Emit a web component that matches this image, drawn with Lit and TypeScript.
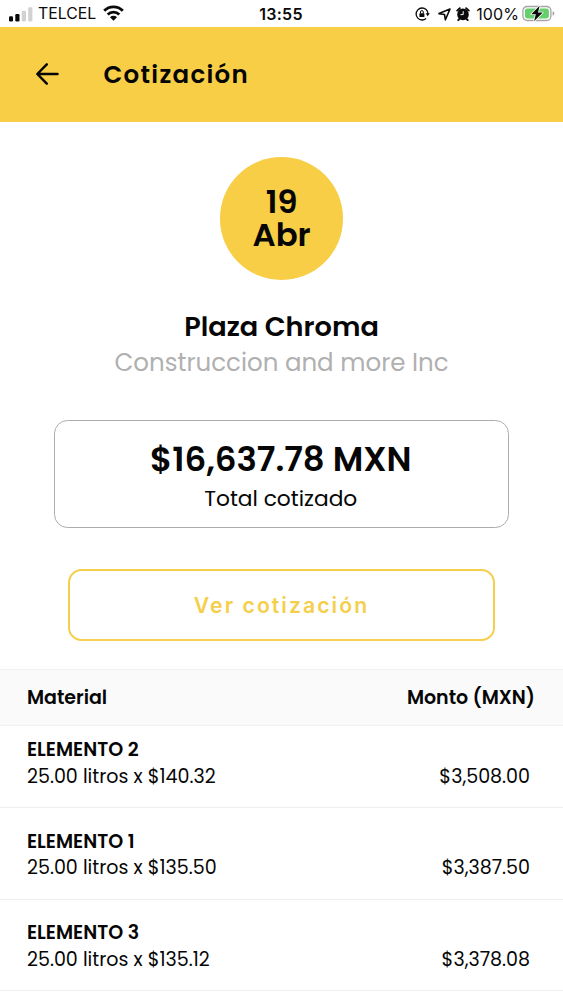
import { LitElement, html, css } from "lit";
import { customElement } from "lit/decorators.js";

interface Item {
  name: string;
  detail: string;
  amount: string;
}

const ITEMS: Item[] = [
  { name: "ELEMENTO 2", detail: "25.00 litros x $140.32", amount: "$3,508.00" },
  { name: "ELEMENTO 1", detail: "25.00 litros x $135.50", amount: "$3,387.50" },
  { name: "ELEMENTO 3", detail: "25.00 litros x $135.12", amount: "$3,378.08" },
];

@customElement("status-bar")
export class StatusBar extends LitElement {
  static styles = css`
    :host {
      display: grid;
      grid-template-columns: 1fr auto 1fr;
      align-items: center;
      height: 27px;
      box-sizing: border-box;
      padding: 1px 8px 0 9px;
      font: 400 16px/26px Inter, "Liberation Sans", sans-serif;
      color: #0a0a0a;
    }
    svg { display: block; flex: none; }
    .side { display: flex; align-items: center; height: 26px; }
    .right { justify-content: flex-end; }
    .carrier { margin-left: 5px; font-size: 15.8px; }
    .wifi { margin-left: 7px; margin-top: -2px; }
    .time { margin-right: 2px; font-weight: 600; font-size: 16px; letter-spacing: 0.3px; }
    .nav { margin-left: 8px; }
    .alarm { margin-left: 5px; }
    .pct { margin-left: 6px; letter-spacing: 0.1px; }
    .battery { margin-left: 3px; margin-top: -2px; }
  `;

  render() {
    return html`
      <div class="side">
        <svg width="24" height="15" viewBox="0 0 24 15">
          <rect x="0" y="9.3" width="4" height="5.2" rx="1.2" fill="#0a0a0a" />
          <rect x="6.3" y="7" width="4.2" height="7.5" rx="1.2" fill="#0a0a0a" />
          <rect x="12.8" y="3.8" width="4.2" height="10.7" rx="1.2" fill="#d2d2d2" />
          <rect x="19.2" y="0.3" width="4.2" height="14.2" rx="1.2" fill="#d2d2d2" />
        </svg>
        <span class="carrier">TELCEL</span>
        <svg class="wifi" width="21" height="16" viewBox="0 0 21 16">
          <g fill="none" stroke="#0a0a0a" stroke-width="2.8">
            <path d="M1.2 5.7a13.2 13.2 0 0 1 18.6 0" />
            <path d="M4.7 9.5a8.2 8.2 0 0 1 11.6 0" />
          </g>
          <path d="M10.5 15.8 7 12.3a5 5 0 0 1 7 0z" fill="#0a0a0a" />
        </svg>
      </div>
      <span class="time">13:55</span>
      <div class="side right">
        <svg width="15" height="14" viewBox="0 0 15 14">
          <path d="M11.1 2.5A6 6 0 1 0 11.1 11.5M11.1 2.5A6 6 0 0 1 13 7" fill="none" stroke="#0a0a0a" stroke-width="1.3" />
          <path d="M10.6 6.3h4.2l-2.1 2.9z" fill="#0a0a0a" />
          <rect x="4.4" y="6.2" width="5" height="3.9" rx="0.6" fill="#0a0a0a" />
          <path d="M5.5 6.4V5a1.4 1.4 0 0 1 2.8 0v1.4" fill="none" stroke="#0a0a0a" stroke-width="1" />
        </svg>
        <svg class="nav" width="13" height="13" viewBox="0 0 13 13">
          <path d="M12 1 7.4 11.8 6.5 6.5 1 5.6z" fill="none" stroke="#0a0a0a" stroke-width="1.6" stroke-linejoin="round" />
        </svg>
        <svg class="alarm" width="14" height="14" viewBox="0 0 14 14">
          <circle cx="7" cy="7.4" r="5.8" fill="#0a0a0a" />
          <path d="M1.2 3.6 3.8 1.2M12.8 3.6 10.2 1.2M2.3 13.2l1.6-1.8M11.7 13.2l-1.6-1.8" stroke="#0a0a0a" stroke-width="1.9" stroke-linecap="round" />
          <path d="M7.2 4.2v3.4H4.4" fill="none" stroke="#fff" stroke-width="1" />
        </svg>
        <span class="pct">100%</span>
        <svg class="battery" width="33" height="17" viewBox="0 0 33 17">
          <rect x="0.9" y="1.5" width="28" height="14" rx="4.2" fill="none" stroke="#a5a5a5" stroke-width="1.3" />
          <rect x="2.9" y="3.5" width="24" height="10" rx="2.4" fill="#65cf6c" />
          <path d="M30.6 6.3v4.4c1.5-.6 1.8-1.5 1.8-2.2s-.3-1.6-1.8-2.2z" fill="#a5a5a5" />
          <path d="M17.6 0.8 9.3 9.3h4.5l-1.7 6.9 8.6-8.7h-4.7z" fill="#0a0a0a" stroke="#fff" stroke-width="1.6" paint-order="stroke" stroke-linejoin="round" />
        </svg>
      </div>
    `;
  }
}

@customElement("app-root")
export class AppRoot extends LitElement {
  static styles = css`
    :host {
      display: flex;
      flex-direction: column;
      width: 563px;
      height: 1000px;
      overflow: hidden;
      background: #fff;
      color: #060606;
      font-family: Poppins, Inter, sans-serif;
    }
    .appbar {
      display: flex;
      align-items: center;
      height: 95px;
      padding-left: 35px;
      background: #f7ce46;
    }
    .appbar svg { display: block; }
    .title {
      margin: 0 0 0 43.5px;
      font-size: 24.5px;
      font-weight: 600;
      line-height: 36px;
      letter-spacing: 1.28px;
    }
    .summary { display: flex; flex-direction: column; align-items: center; }
    .date {
      display: flex;
      flex-direction: column;
      align-items: center;
      justify-content: center;
      width: 122.5px;
      height: 122.5px;
      margin-top: 35.3px;
      border-radius: 50%;
      background: #f7ce46;
      font-size: 32.4px;
      font-weight: 600;
      line-height: 32.6px;
      letter-spacing: -0.15px;
    }
    .project {
      margin-top: 29.2px;
      font-size: 27.2px;
      font-weight: 600;
      line-height: 36px;
    }
    .client {
      margin-top: -0.5px;
      font-size: 24.5px;
      line-height: 37px;
      color: #b0b0b0;
    }
    .total {
      box-sizing: border-box;
      width: 455px;
      height: 108px;
      margin-top: 38.5px;
      padding: 16px 1.5px 0 0;
      border: 1.36px solid #acacac;
      border-radius: 13.6px;
      text-align: center;
    }
    .sum { font-size: 34px; font-weight: 600; line-height: 44px; letter-spacing: -0.05px; }
    .caption { font-size: 21.76px; line-height: 36px; }
    .view {
      box-sizing: border-box;
      width: 427px;
      height: 72px;
      margin-top: 41px;
      padding: 0;
      border: 2px solid #f5cf4b;
      border-radius: 13.6px;
      background: #fff;
      color: #f5cf4b;
      font: 600 21.2px/30px Inter, sans-serif;
      letter-spacing: 2.05px;
    }
    .head {
      display: flex;
      align-items: center;
      justify-content: space-between;
      box-sizing: border-box;
      height: 57px;
      margin-top: 28px;
      padding: 0 28px 0 27px;
      border: solid #f1f1f1;
      border-width: 1px 0;
      background: #fafafa;
      font-size: 19.04px;
      font-weight: 600;
      line-height: 27px;
      letter-spacing: -0.04px;
    }
    .row {
      display: grid;
      grid-template-columns: 1fr auto;
      align-items: end;
      box-sizing: border-box;
      height: 91.5px;
      padding: 0 33px 17.3px 27px;
      border-bottom: 1px solid #eeeeee;
      font-size: 19.04px;
      line-height: 26.5px;
    }
    .row:first-of-type { height: 82.5px; }
    .name { font-weight: 600; }
  `;

  render() {
    return html`
      <status-bar></status-bar>
      <header class="appbar">
        <svg width="25" height="25" viewBox="0 0 25 25">
          <path d="M22.5 12H2.6M11.8 2.3 2.3 12 11.8 21.7" fill="none" stroke="#060606" stroke-width="2.5" stroke-linecap="round" stroke-linejoin="round" />
        </svg>
        <h1 class="title">Cotización</h1>
      </header>
      <section class="summary">
        <div class="date"><span>19</span><span>Abr</span></div>
        <div class="project">Plaza Chroma</div>
        <div class="client">Construccion and more Inc</div>
        <div class="total">
          <div class="sum">$16,637.78 MXN</div>
          <div class="caption">Total cotizado</div>
        </div>
        <button class="view">Ver cotización</button>
      </section>
      <section>
        <header class="head"><span>Material</span><span>Monto (MXN)</span></header>
        ${ITEMS.map(
          (item) => html`
            <div class="row">
              <div>
                <div class="name">${item.name}</div>
                <div>${item.detail}</div>
              </div>
              <div>${item.amount}</div>
            </div>
          `,
        )}
      </section>
    `;
  }
}
